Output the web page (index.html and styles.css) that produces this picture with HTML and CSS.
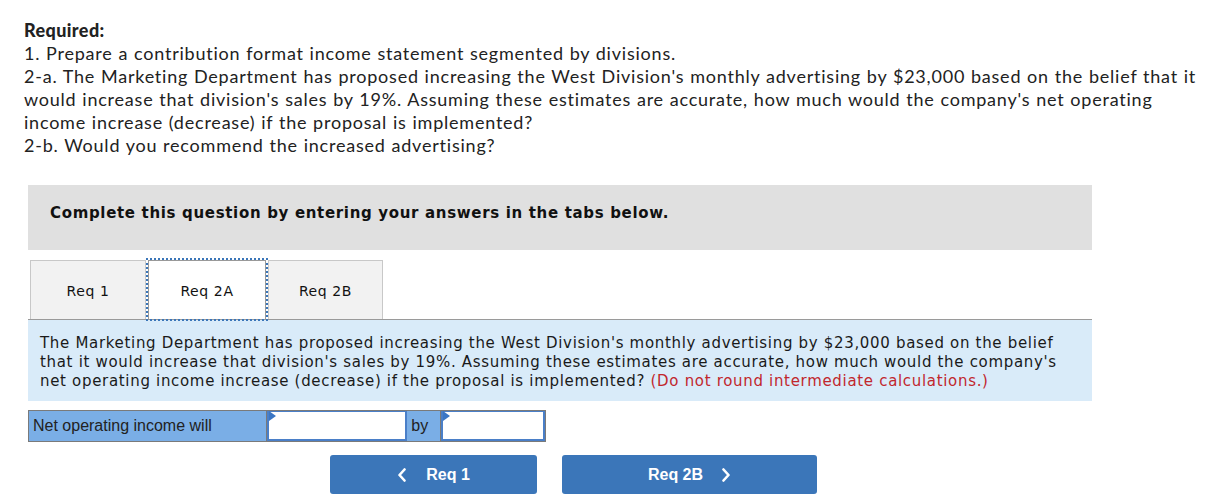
FILE: index.html
```html
<!DOCTYPE html>
<html>
<head>
<meta charset="utf-8">
<link rel="stylesheet" href="styles.css">
</head>
<body>
<div class="page">
  <div class="req">
    <div class="req-title">Required:</div>
    <div>1. Prepare a contribution format income statement segmented by divisions.</div>
    <div>2-a. The Marketing Department has proposed increasing the West Division's monthly advertising by $23,000 based on the belief that it<br>would increase that division's sales by 19%. Assuming these estimates are accurate, how much would the company's net operating<br>income increase (decrease) if the proposal is implemented?</div>
    <div>2-b. Would you recommend the increased advertising?</div>
  </div>

  <div class="prompt">Complete this question by entering your answers in the tabs below.</div>

  <div class="tabs">
    <div class="tab t1">Req 1</div>
    <div class="tab t2 active">Req 2A</div>
    <div class="tab t3">Req 2B</div>
  </div>

  <div class="panel">The Marketing Department has proposed increasing the West Division's monthly advertising by $23,000 based on the belief<br>that it would increase that division's sales by 19%. Assuming these estimates are accurate, how much would the company's<br>net operating income increase (decrease) if the proposal is implemented? <span class="note">(Do not round intermediate calculations.)</span></div>

  <div class="answer">
    <div class="cell label">Net operating income will</div>
    <div class="cell input i1"><span class="flag"></span></div>
    <div class="cell label by">by</div>
    <div class="cell input i2"><span class="flag"></span></div>
  </div>

  <div class="nav">
    <div class="btn prev">
      <svg class="chev" width="10" height="14" viewBox="0 0 10 14"><polyline points="7.5,1.5 2.5,7 7.5,12.5" fill="none" stroke="#fff" stroke-width="2.6" stroke-linecap="round" stroke-linejoin="round"/></svg>
      <span>Req 1</span>
    </div>
    <div class="btn next">
      <span>Req 2B</span>
      <svg class="chev" width="10" height="14" viewBox="0 0 10 14"><polyline points="2.5,1.5 7.5,7 2.5,12.5" fill="none" stroke="#fff" stroke-width="2.6" stroke-linecap="round" stroke-linejoin="round"/></svg>
    </div>
  </div>
</div>
</body>
</html>
```

FILE: styles.css
```css
html, body {
  margin: 0;
  padding: 0;
  background: #fff;
}
.page {
  padding: 19px 0 0 24px;
}
.req {
  font-family: Lato, "Open Sans", sans-serif;
  font-size: 18px;
  line-height: 23px;
  letter-spacing: 0.78px;
  word-spacing: 0.45px;
  color: #222;
  white-space: nowrap;
}
.req-title {
  font-weight: 900;
  letter-spacing: 0.4px;
}
.prompt {
  margin: 28px 0 0 4px;
  width: 1042px;
  height: 55px;
  padding: 0 0 10px 22px;
  background: #e0e0e0;
  font-family: "DejaVu Sans", Verdana, sans-serif;
  font-weight: bold;
  font-size: 15px;
  line-height: 18px;
  letter-spacing: 0.67px;
  color: #111;
  display: flex;
  align-items: center;
}
.tabs {
  margin: 10px 0 0 4px;
  width: 1064px;
  height: 60px;
  border-bottom: 1px solid #9a9a9a;
  display: flex;
  gap: 2px;
  padding-left: 2px;
  box-sizing: border-box;
}
.tab {
  box-sizing: border-box;
  height: 59px;
  background: #f2f2f2;
  border: 1px solid #c8c8c8;
  border-bottom: none;
  display: flex;
  align-items: center;
  justify-content: center;
  font-family: "DejaVu Sans", Verdana, sans-serif;
  font-size: 14px;
  letter-spacing: 0.6px;
  padding-top: 2px;
  color: #111;
}
.t1 { width: 116px; }
.t2 { width: 118px; }
.t3 { width: 115px; }
.tab.active {
  background: #fff;
  border-color: #999;
  outline: 2px dotted #3b76b9;
  outline-offset: 0;
}
.panel {
  margin-left: 4px;
  width: 1064px;
  box-sizing: border-box;
  background: #d9ebf9;
  padding: 14px 12px 10px 12px;
  font-family: "DejaVu Sans", Verdana, sans-serif;
  font-size: 15px;
  line-height: 19px;
  letter-spacing: 0.68px;
  color: #1a1a1a;
  white-space: nowrap;
}
.note {
  color: #c1272d;
}
.answer {
  margin: 9px 0 0 4px;
  width: 518px;
  height: 32px;
  box-sizing: border-box;
  border: 1px solid #7a7a7a;
  display: flex;
}
.cell {
  box-sizing: border-box;
  height: 30px;
  font-family: "Liberation Sans", Arial, sans-serif;
  font-size: 16px;
  color: #222;
}
.label {
  background: #7aaee6;
  display: flex;
  align-items: center;
  padding-left: 4px;
  width: 238px;
  border-right: 1px solid #7a7a7a;
}
.label.by {
  width: 34px;
  padding-left: 4px;
}
.input {
  position: relative;
  background: #fff;
  border: 2px solid #4a7fc8;
  border-top-width: 1px;
}
.i1 { width: 141px; }
.i2 { width: 104px; }
.flag {
  position: absolute;
  left: 0;
  top: 0;
  width: 0;
  height: 0;
  border-top: 5px solid transparent;
  border-bottom: 5px solid transparent;
  border-left: 7px solid #3b76c4;
  margin-top: -1px;
}
.nav {
  margin: 13px 0 0 306px;
  display: flex;
  gap: 25px;
}
.btn {
  height: 39px;
  border-radius: 3px;
  background: #3b76b9;
  color: #fff;
  font-family: "Liberation Sans", Arial, sans-serif;
  font-weight: bold;
  font-size: 16px;
  display: flex;
  align-items: center;
  justify-content: center;
}
.prev { width: 207px; gap: 19px; }
.next { width: 255px; gap: 18px; }
.chev {
  display: block;
}
```
